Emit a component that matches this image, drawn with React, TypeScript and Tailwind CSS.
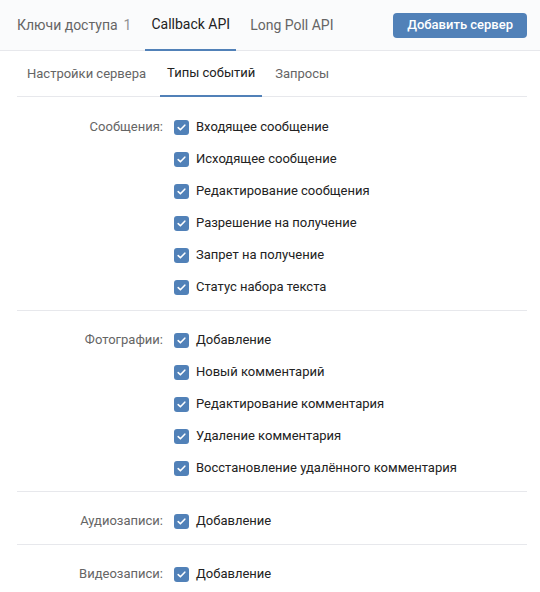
import React from 'react'

const sections = [
  {
    label: 'Сообщения:',
    items: [
      'Входящее сообщение',
      'Исходящее сообщение',
      'Редактирование сообщения',
      'Разрешение на получение',
      'Запрет на получение',
      'Статус набора текста',
    ],
  },
  {
    label: 'Фотографии:',
    items: [
      'Добавление',
      'Новый комментарий',
      'Редактирование комментария',
      'Удаление комментария',
      'Восстановление удалённого комментария',
    ],
  },
  { label: 'Аудиозаписи:', items: ['Добавление'] },
  { label: 'Видеозаписи:', items: ['Добавление'] },
]

function Check() {
  return (
    <span className="w-[15px] h-[15px] rounded-[3px] bg-[#5181b8] flex items-center justify-center shrink-0">
      <svg width="11" height="11" viewBox="0 0 11 11" fill="none">
        <path d="M2.2 5.6 L4.4 7.8 L8.8 3.2" stroke="white" strokeWidth="1.6" strokeLinecap="round" strokeLinejoin="round" />
      </svg>
    </span>
  )
}

export default function App() {
  return (
    <div className="w-[540px] h-[592px] bg-white overflow-hidden font-['Roboto',sans-serif] text-[13px] text-[#222]">
      {/* верхние вкладки */}
      <div className="h-[51px] bg-[#fafbfc] border-b border-[#e7e8ec] flex items-stretch pl-[17px] pr-[13px]">
        <div className="flex items-center text-[14px] text-[#656565] mr-[14px]">
          Ключи доступа<span className="ml-[6px] text-[#939393]">1</span>
        </div>
        <div className="flex items-center text-[14px] text-[#222] px-[6px] border-b-2 border-[#5181b8] -mb-px">
          Callback API
        </div>
        <div className="flex items-center text-[14px] text-[#656565] ml-[14px]">Long Poll API</div>
        <div className="ml-auto flex items-center">
          <button className="h-[25px] px-[14px] rounded-[4px] bg-[#5181b8] text-white text-[13px] font-medium">
            Добавить сервер
          </button>
        </div>
      </div>

      <div className="pl-[17px] pr-[13px]">
        {/* вкладки второго уровня */}
        <div className="h-[46px] border-b border-[#e7e8ec] flex items-stretch pl-[10px]">
          <div className="flex items-center text-[#656565]">Настройки сервера</div>
          <div className="flex items-center text-[#222] ml-[14px] px-[7px] border-b-2 border-[#5181b8] -mb-px">Типы событий</div>
          <div className="flex items-center text-[#656565] ml-[13px]">Запросы</div>
        </div>

        {sections.map((s, i) => (
          <div
            key={s.label}
            className={
              'flex pb-[7px] ' +
              (i === 0 ? 'pt-[14px] ' : 'pt-[13px] ') +
              (i < sections.length - 1 ? 'border-b border-[#e7e8ec]' : '')
            }
          >
            <div className="w-[146px] text-right text-[#656565] h-[32px] leading-[32px] shrink-0">{s.label}</div>
            <div className="flex flex-col ml-[11px]">
              {s.items.map((it) => (
                <div key={it} className="h-[32px] flex items-center gap-[7px]">
                  <Check />
                  <span className="leading-[32px]">{it}</span>
                </div>
              ))}
            </div>
          </div>
        ))}
      </div>
    </div>
  )
}
